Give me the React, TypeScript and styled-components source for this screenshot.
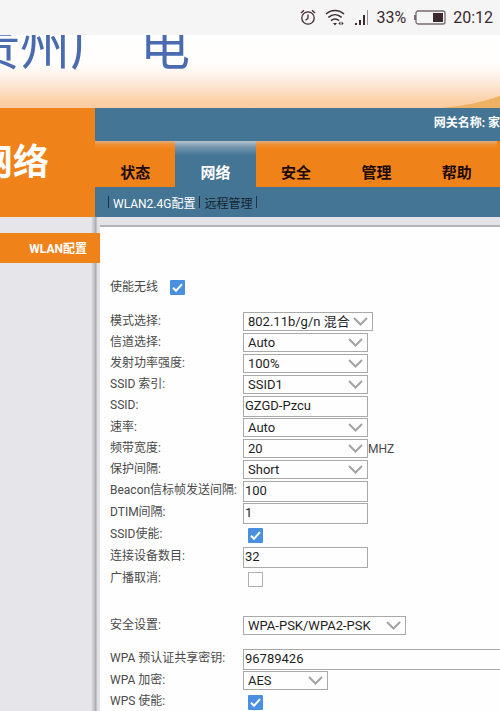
import React, { useId, useState } from "react";
import styled, { createGlobalStyle, css } from "styled-components";

const GlobalStyle = createGlobalStyle`
  * { box-sizing: border-box; }
  html, body { margin: 0; padding: 0; }
  html { overflow: hidden; }
  body {
    background: #e4e3e7;
    color: #4a4a4a;
    font-family: Roboto, "Noto Sans CJK SC", sans-serif;
    font-size: 12px;
  }
  button, input, select { font-family: inherit; margin: 0; border-radius: 0; }
`;

const Page = styled.div`
  display: flex;
  flex-direction: column;
  min-height: 100vh;
  overflow: hidden;
`;

const StatusBar = styled.div`
  display: flex;
  align-items: center;
  justify-content: flex-end;
  height: 35px;
  padding-right: 7px;
  background: #f5f5f5;
  color: #3a2a30;
  font-size: 16px;
`;

const StatusIcon = styled.svg<{ $gap: number }>`
  display: block;
  margin-right: ${(p) => p.$gap}px;
`;

const StatusText = styled.span<{ $gap?: number }>`
  margin-right: ${(p) => p.$gap ?? 0}px;
`;

const Banner = styled.div`
  position: relative;
  display: flex;
  align-items: flex-end;
  justify-content: flex-start;
  height: 73px;
  overflow: hidden;
  background: linear-gradient(#ffffff 0%, #fffdfb 42%, #fdeadb 65%, #fbcfa4 92%, #f8cda6 100%);
`;

const BannerTitle = styled.h1`
  display: flex;
  gap: 20px;
  margin: 0 0 0 -30px;
  padding-bottom: 34px;
  height: 86px;
  color: #4a6bb0;
  font-size: 50px;
  font-weight: 400;
  line-height: 52px;
  white-space: nowrap;
`;

const BannerHill = styled.svg`
  position: absolute;
  right: 0;
  bottom: 0;
`;

const Header = styled.header`
  display: flex;
  height: 109px;
  background: #447594;
`;

const SectionTitle = styled.div`
  display: flex;
  flex: 0 0 95px;
  justify-content: flex-end;
  padding: 29px 46px 0 0;
  overflow: hidden;
  background: #f0821a;
  color: #fff;
  font-size: 36px;
  font-weight: 700;
  line-height: 52px;
  white-space: nowrap;
`;

const HeaderMain = styled.div`
  flex: 1;
  min-width: 0;
`;

const Gateway = styled.div`
  display: flex;
  justify-content: flex-end;
  height: 33px;
  overflow: hidden;
  color: #fff;
  font-weight: 700;
  line-height: 30px;
  white-space: nowrap;
`;

const Tabs = styled.nav`
  display: grid;
  grid-template-columns: repeat(5, 1fr);
  height: 46px;
  padding-right: 3px;
  background: #f0821a;
`;

const Tab = styled.button<{ $active?: boolean }>`
  padding: 14px 0 0;
  border: 0;
  font-size: 15px;
  font-weight: 700;
  background: linear-gradient(#dfb18a 0px, #ee9038 3px, #f0821a 8px);
  color: #1c0a06;
  ${(p) =>
    p.$active &&
    css`
      background: linear-gradient(#b4c4d0 0px, #7897ae 6px, #447594 14px);
      color: #fff;
    `}
`;

const SubNav = styled.nav`
  display: flex;
  align-items: center;
  gap: 4px;
  height: 30px;
  padding-left: 13px;
  white-space: nowrap;
`;

const Divider = styled.span`
  width: 1px;
  height: 12px;
  background: #1d3447;
`;

const SubLink = styled.a<{ $active?: boolean }>`
  color: ${(p) => (p.$active ? "#fff" : "#16232f")};
  text-decoration: none;
`;

const Body = styled.div`
  display: flex;
  flex: 1;
`;

const Sidebar = styled.aside`
  flex: 0 0 100px;
  padding-top: 16px;
  background: linear-gradient(90deg, #e6e5e9 0 91px, #c4c3c7 94px, #a9a8ac 96px, #dcdbdf 97px, #e6e5e9 100px);
`;

const SideItem = styled.button`
  display: block;
  width: 100%;
  height: 30px;
  padding: 0 13px 2px 0;
  border: 0;
  background: #f0821a;
  color: #fff;
  font-size: 12px;
  font-weight: 700;
  text-align: right;
`;

const Content = styled.main`
  flex: 1;
  min-width: 0;
  margin-top: 8px;
  padding: 50px 0 0 10px;
  border-top: 2px solid #b4b3b7;
  background: #fefefe;
`;

const Group = styled.div<{ $before?: number }>`
  display: flex;
  flex-direction: column;
  padding-top: ${(p) => p.$before ?? 0}px;
`;

const Row = styled.div<{ $tall?: boolean }>`
  display: flex;
  align-items: center;
  height: ${(p) => (p.$tall ? 22 : 21)}px;
`;

const Label = styled.label<{ $inline?: boolean }>`
  flex: 0 0 ${(p) => (p.$inline ? 60 : 133)}px;
  padding-bottom: 2px;
  line-height: 16px;
  white-space: nowrap;
`;

const SelectBox = styled.span<{ $width: number }>`
  display: grid;
  width: ${(p) => p.$width}px;
  height: 19px;
  flex: none;
  align-items: center;
  > * { grid-area: 1 / 1; }
`;

const SelectInput = styled.select`
  width: 100%;
  height: 19px;
  padding: 0 0 0 4px;
  border: 1px solid #a9a9a9;
  appearance: none;
  background: #fefefe;
  color: #1f1f1f;
  font-size: 13px;
  line-height: 17px;
`;

const Chevron = styled.svg`
  justify-self: end;
  margin-right: 5px;
  pointer-events: none;
`;

const TextInput = styled.input<{ $fill?: boolean }>`
  ${(p) => (p.$fill ? "flex: 1; min-width: 0;" : "width: 125px;")}
  height: 21px;
  padding: 0 1px 2px;
  border: 1px solid #a9a9a9;
  border-right-width: ${(p) => (p.$fill ? 0 : 1)}px;
  background: #fefefe;
  color: #1f1f1f;
  font-size: 13px;
`;

const Check = styled.input<{ $indent?: boolean }>`
  width: 15px;
  height: 15px;
  margin-left: ${(p) => (p.$indent ? 5 : 0)}px;
  border: 1px solid #b0b0b0;
  appearance: none;
  background: #fefefe;
  &:checked {
    border: 0;
    border-radius: 1px;
    background: #4a90e0 url("data:image/svg+xml,%3Csvg xmlns='http://www.w3.org/2000/svg' viewBox='0 0 15 15'%3E%3Cpath d='M3 7.8l3 3 6-6.6' fill='none' stroke='white' stroke-width='2'/%3E%3C/svg%3E") center / 15px 15px;
  }
`;

const CheckField = ({ label, on, inline }: { label: string; on?: boolean; inline?: boolean }) => {
  const id = useId();
  return (
    <Row $tall={!inline}>
      <Label htmlFor={id} $inline={inline}>{label}</Label>
      <Check id={id} type="checkbox" defaultChecked={on} $indent={!inline} />
    </Row>
  );
};

const SelectField = ({ label, value, width = 125, unit }: { label: string; value: string; width?: number; unit?: string }) => {
  const id = useId();
  return (
    <Row>
      <Label htmlFor={id}>{label}</Label>
      <SelectBox $width={width}>
        <SelectInput id={id} defaultValue={value}>
          <option>{value}</option>
        </SelectInput>
        <Chevron width="15" height="9" viewBox="0 0 15 9" aria-hidden="true">
          <path d="M1 1l6.5 6.5L14 1" fill="none" stroke="#a3a3a3" strokeWidth="2" />
        </Chevron>
      </SelectBox>
      {unit && <span>{unit}</span>}
    </Row>
  );
};

const TextField = ({ label, value, fill }: { label: string; value: string; fill?: boolean }) => {
  const id = useId();
  return (
    <Row $tall>
      <Label htmlFor={id}>{label}</Label>
      <TextInput id={id} type="text" defaultValue={value} $fill={fill} />
    </Row>
  );
};

const TABS = ["状态", "网络", "安全", "管理", "帮助"];

export default function App() {
  const [tab, setTab] = useState("网络");
  return (
    <Page>
      <GlobalStyle />
      <StatusBar>
        <StatusIcon $gap={9} width="16" height="17" viewBox="0 0 16 17" fill="none" stroke="currentColor" strokeWidth="1.3" aria-hidden="true">
          <circle cx="8" cy="9" r="6.2" />
          <path d="M8 5.5V9.2L5.6 11.2M1 4l3-2.8M15 4l-3-2.8" />
        </StatusIcon>
        <StatusIcon $gap={10} width="20" height="18" viewBox="0 0 20 18" fill="none" stroke="currentColor" strokeWidth="1.5" aria-hidden="true">
          <path d="M1 5C6 0.2 14 0.2 19 5M3.4 8.4c4-3.6 9.2-3.6 13.2 0M6 11.6c2.4-2 5.6-2 8 0" />
          <path d="M8 14h4l-2 2.6zM15.4 12.6v3.6l-2-1.8zM16.6 12.6v3.6l2-1.8z" fill="currentColor" stroke="none" />
        </StatusIcon>
        <StatusIcon $gap={7} width="14" height="17" viewBox="0 0 14 17" aria-hidden="true">
          <path d="M0 14h2v2H0zM4 11h2v5H4zM8 6h2v10H8z" fill="currentColor" />
          <path d="M12 1h1v15h-1z" fill="#9b8f95" />
        </StatusIcon>
        <StatusText $gap={8}>33%</StatusText>
        <StatusIcon $gap={7} width="32" height="15" viewBox="0 0 32 15" aria-hidden="true">
          <rect x="2" y="1" width="29" height="13" rx="2" fill="none" stroke="#77696f" strokeWidth="1.3" />
          <path d="M0 5h2v5H0z" fill="#77696f" />
          <path d="M19 3h10v9H19z" fill="currentColor" />
        </StatusIcon>
        <StatusText>20:12</StatusText>
      </StatusBar>
      <Banner>
        <BannerTitle><span>贵州广</span><span>电</span></BannerTitle>
        <BannerHill width="60" height="12" viewBox="0 0 60 12" aria-hidden="true">
          <path d="M0 12Q36 9 60 0V12Z" fill="#eeb062" />
        </BannerHill>
      </Banner>
      <Header>
        <SectionTitle>网络</SectionTitle>
        <HeaderMain>
          <Gateway>网关名称: 家</Gateway>
          <Tabs>
            {TABS.map((t) => (
              <Tab key={t} type="button" $active={t === tab} onClick={() => setTab(t)}>{t}</Tab>
            ))}
          </Tabs>
          <SubNav>
            <Divider />
            <SubLink href="#wlan" $active>WLAN2.4G配置</SubLink>
            <Divider />
            <SubLink href="#remote">远程管理</SubLink>
            <Divider />
          </SubNav>
        </HeaderMain>
      </Header>
      <Body>
        <Sidebar>
          <SideItem type="button">WLAN配置</SideItem>
        </Sidebar>
        <Content>
          <CheckField label="使能无线" on inline />
          <Group $before={13}>
            <SelectField label="模式选择:" value="802.11b/g/n 混合" width={130} />
            <SelectField label="信道选择:" value="Auto" />
            <SelectField label="发射功率强度:" value="100%" />
            <SelectField label="SSID 索引:" value="SSID1" />
            <TextField label="SSID:" value="GZGD-Pzcu" />
            <SelectField label="速率:" value="Auto" />
            <SelectField label="频带宽度:" value="20" unit="MHZ" />
            <SelectField label="保护间隔:" value="Short" />
            <TextField label="Beacon信标帧发送间隔:" value="100" />
            <TextField label="DTIM间隔:" value="1" />
            <CheckField label="SSID使能:" on />
            <TextField label="连接设备数目:" value="32" />
            <CheckField label="广播取消:" />
          </Group>
          <Group $before={25}>
            <SelectField label="安全设置:" value="WPA-PSK/WPA2-PSK" width={163} />
          </Group>
          <Group $before={12}>
            <TextField label="WPA 预认证共享密钥:" value="96789426" fill />
            <SelectField label="WPA 加密:" value="AES" width={85} />
            <CheckField label="WPS 使能:" on />
          </Group>
        </Content>
      </Body>
    </Page>
  );
}
